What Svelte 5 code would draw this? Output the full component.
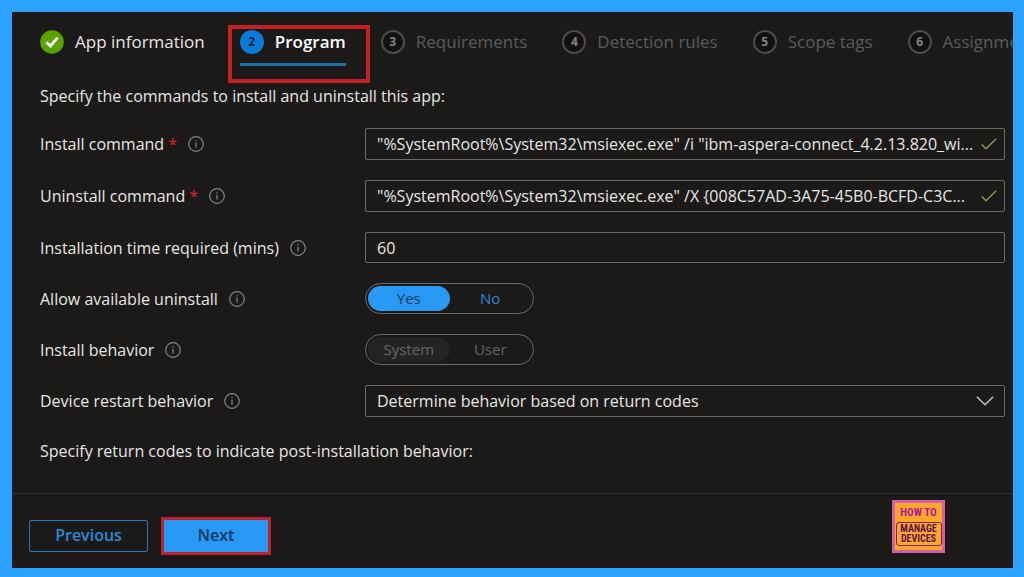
<script>
  const steps = [
    { label: 'App information', state: 'done' },
    { label: 'Program', state: 'current' },
    { label: 'Requirements', state: 'todo' },
    { label: 'Detection rules', state: 'todo' },
    { label: 'Scope tags', state: 'todo' },
    { label: 'Assignments', state: 'todo' }
  ];
  let install = $state('"%SystemRoot%\\System32\\msiexec.exe" /i "ibm-aspera-connect_4.2.13.820_wi...');
  let uninstall = $state('"%SystemRoot%\\System32\\msiexec.exe" /X {008C57AD-3A75-45B0-BCFD-C3C...');
  let minutes = $state('60');
  let allow = $state('Yes');
  let behavior = $state('System');
</script>

{#snippet info()}
  <svg class="info" viewBox="0 0 16 16" aria-hidden="true">
    <circle cx="8" cy="8" r="7.3" fill="none" stroke="currentColor" stroke-width="1.2" />
    <path d="M8 6.8V11.6M8 4.2V5.6" stroke="currentColor" stroke-width="1.3" />
  </svg>
{/snippet}

{#snippet valid()}
  <svg class="valid" viewBox="0 0 16 12" aria-hidden="true">
    <path d="M0.8 6.4L5 10.8L15.2 0.8" fill="none" stroke="currentColor" stroke-width="1.4" />
  </svg>
{/snippet}

<div class="page">
  <nav>
    <ol class="steps">
      {#each steps as step, i}
        <li>
          <a href="#step" class="step {step.state}" aria-current={step.state === 'current' ? 'step' : undefined}>
            {#if step.state === 'done'}
              <svg class="badge" viewBox="0 0 24 24" aria-hidden="true">
                <circle cx="12" cy="12" r="11.8" fill="#57a300" />
                <path d="M6.4 12.2L10.4 16L17.6 7.6" fill="none" stroke="#fff" stroke-width="2.8" />
              </svg>
            {:else}
              <span class="badge num">{i + 1}</span>
            {/if}
            <span class="name">{step.label}</span>
          </a>
        </li>
      {/each}
    </ol>
  </nav>

  <main>
    <p>Specify the commands to install and uninstall this app:</p>

    <form class="fields">
      <div class="row">
        <label for="install">Install command <span class="req">*</span></label>
        {@render info()}
      </div>
      <div class="box">
        <input id="install" type="text" bind:value={install} />
        {@render valid()}
      </div>

      <div class="row">
        <label for="uninstall">Uninstall command <span class="req">*</span></label>
        {@render info()}
      </div>
      <div class="box">
        <input id="uninstall" type="text" bind:value={uninstall} />
        {@render valid()}
      </div>

      <div class="row">
        <label for="minutes">Installation time required (mins)</label>
        {@render info()}
      </div>
      <div class="box short">
        <input id="minutes" type="text" bind:value={minutes} />
      </div>

      <div class="row">
        <span id="allow-label">Allow available uninstall</span>
        {@render info()}
      </div>
      <div class="toggle" role="radiogroup" aria-labelledby="allow-label">
        {#each ['Yes', 'No'] as option}
          <label><input type="radio" name="allow" value={option} bind:group={allow} /><span>{option}</span></label>
        {/each}
      </div>

      <div class="row">
        <span id="behavior-label">Install behavior</span>
        {@render info()}
      </div>
      <div class="toggle" role="radiogroup" aria-labelledby="behavior-label">
        {#each ['System', 'User'] as option}
          <label><input type="radio" name="behavior" value={option} bind:group={behavior} disabled /><span>{option}</span></label>
        {/each}
      </div>

      <div class="row">
        <label for="restart">Device restart behavior</label>
        {@render info()}
      </div>
      <div class="box pick">
        <select id="restart">
          <option>Determine behavior based on return codes</option>
        </select>
        <svg class="chevron" viewBox="0 0 18 10" aria-hidden="true">
          <path d="M0.8 0.8L9 8.8L17.2 0.8" fill="none" stroke="currentColor" stroke-width="1.4" />
        </svg>
      </div>
    </form>

    <p>Specify return codes to indicate post-installation behavior:</p>
  </main>

  <footer>
    <button type="button" class="previous">Previous</button>
    <button type="button" class="next">Next</button>
    <div class="logo">
      <span class="how">HOW TO</span>
      <span class="plate"><span>MANAGE</span><span>DEVICES</span></span>
    </div>
  </footer>
</div>

<style>
  :global(body) {
    margin: 0;
    background: #2ba2ff;
  }
  .page {
    box-sizing: border-box;
    min-height: 100vh;
    display: flex;
    flex-direction: column;
    border: solid #2ba2ff;
    border-width: 12px 11px 9px 12px;
    background: #1b1a19;
    color: #e8e6e4;
    font: 16px/24px "Open Sans", "Noto Sans", sans-serif;
    overflow: hidden;
  }
  .steps {
    display: flex;
    gap: 35px;
    margin: 0;
    padding: 18px 0 0 28px;
    list-style: none;
    white-space: nowrap;
  }
  li {
    flex: none;
  }
  .step {
    position: relative;
    display: flex;
    align-items: center;
    gap: 11px;
    padding-bottom: 12px;
    color: #5c5b5a;
    font-size: 17px;
    text-decoration: none;
  }
  .badge {
    box-sizing: border-box;
    width: 24px;
    height: 24px;
    flex: none;
  }
  .num {
    border: 2px solid #4c4b4a;
    border-radius: 50%;
    background: #111;
    color: #858483;
    font-size: 12px;
    line-height: 20px;
    font-weight: 700;
    text-align: center;
  }
  .done {
    color: #e8e6e4;
  }
  .current {
    color: #fff;
    font-weight: 600;
  }
  .current .num {
    border-color: #0b7bd8;
    background: #0b7bd8;
    color: #10273f;
  }
  .current::before {
    content: '';
    position: absolute;
    inset: auto 0 0;
    height: 3px;
    background: #1c6db0;
  }
  .current::after {
    content: '';
    position: absolute;
    inset: -5px -24px -17px -12px;
    border: 4px solid #c42127;
  }
  main {
    flex: 1;
    padding: 18px 8px 0 28px;
  }
  p {
    margin: 0;
  }
  .fields {
    display: grid;
    grid-template-columns: 325px 1fr;
    row-gap: 20px;
    padding: 20px 0 22px;
  }
  .row {
    display: flex;
    align-items: center;
    gap: 11px;
  }
  .req {
    color: #e0202c;
  }
  .info {
    width: 16px;
    height: 16px;
    color: #858483;
  }
  .box {
    box-sizing: border-box;
    height: 32px;
    display: flex;
    align-items: center;
    border: 1px solid #6c6b6a;
    border-radius: 2px;
    padding: 0 7px 0 11px;
  }
  .box.short {
    height: 31px;
  }
  input[type='text'],
  select {
    flex: 1;
    min-width: 0;
    height: 28px;
    margin: 0;
    padding: 0;
    border: 0;
    outline: 0;
    background: transparent;
    color: #e8e6e4;
    font: inherit;
    text-overflow: ellipsis;
  }
  select {
    appearance: none;
  }
  .valid {
    width: 16px;
    height: 12px;
    margin-left: 4px;
    color: #84a04a;
  }
  .pick {
    padding-right: 10px;
  }
  .chevron {
    width: 18px;
    height: 10px;
    color: #c8c6c4;
    pointer-events: none;
  }
  .toggle {
    box-sizing: border-box;
    justify-self: start;
    display: flex;
    width: 169px;
    height: 31px;
    border: 1px solid #6c6b6a;
    border-radius: 16px;
    padding: 2px;
  }
  .toggle label {
    position: relative;
    flex: 1;
    display: flex;
  }
  .toggle input {
    position: absolute;
    opacity: 0;
    margin: 0;
  }
  .toggle span {
    flex: 1;
    border-radius: 13px;
    color: #2b88d8;
    font-size: 15px;
    line-height: 24px;
    text-align: center;
  }
  .toggle input:checked + span {
    background: #2899f5;
    color: #12395c;
  }
  .toggle input:disabled + span {
    color: #656463;
  }
  .toggle input:disabled:checked + span {
    background: #252423;
  }
  footer {
    display: flex;
    align-items: flex-start;
    padding: 6px 68px 15px 17px;
    border-top: 1px solid #31302f;
  }
  button {
    box-sizing: border-box;
    height: 32px;
    margin-top: 20px;
    padding: 0 0 2px;
    font: inherit;
    font-weight: 600;
  }
  .previous {
    width: 119px;
    border: 1px solid #2b78b8;
    border-radius: 2px;
    background: transparent;
    color: #2b88d8;
  }
  .next {
    width: 104px;
    margin-left: 16px;
    border: 0;
    outline: 3px solid #c42127;
    background: #2899f5;
    color: #12395c;
  }
  .logo {
    box-sizing: border-box;
    width: 53px;
    height: 53px;
    margin-left: auto;
    padding-top: 4px;
    border: 3px solid #d35fa8;
    background: #ffa62b;
    display: flex;
    flex-direction: column;
    align-items: center;
    gap: 3px;
    font-family: "Roboto Condensed", Roboto, sans-serif;
    font-weight: 700;
    white-space: nowrap;
  }
  .how {
    color: #b0159c;
    font-size: 11px;
    line-height: 12px;
  }
  .plate {
    box-sizing: border-box;
    display: flex;
    flex-direction: column;
    width: 46px;
    padding: 1px 0;
    border: 1px solid #7a2340;
    border-radius: 3px;
    color: #5a1548;
    font-size: 10px;
    line-height: 10px;
    text-align: center;
  }
</style>
